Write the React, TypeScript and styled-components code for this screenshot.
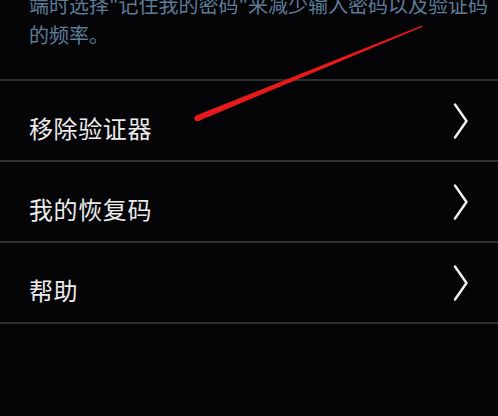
import React from "react";
import styled, { createGlobalStyle } from "styled-components";

const GlobalStyle = createGlobalStyle`
  html, body {
    margin: 0;
    padding: 0;
    background: #050507;
  }
  body {
    font-family: "Noto Sans CJK SC", "Noto Sans", sans-serif;
    -webkit-font-smoothing: antialiased;
  }
`;

const Screen = styled.div`
  position: relative;
  width: 498px;
  height: 416px;
  overflow: hidden;
  background: #050507;
`;

const Note = styled.div`
  padding: 0 20px 0 29px;
  height: 79px;
  overflow: hidden;
`;

const NoteText = styled.p`
  margin: -10px 0 0;
  font-size: 20px;
  line-height: 30px;
  color: #5d7c97;
  white-space: nowrap;
`;

const List = styled.ul`
  list-style: none;
  margin: 0;
  padding: 0;
  border-top: 2px solid #2e2e30;
`;

const Row = styled.li`
  display: flex;
  align-items: center;
  justify-content: space-between;
  height: 79px;
  padding: 0 29px 0 29px;
  border-bottom: 2px solid #2e2e30;
`;

const Label = styled.span`
  padding-top: 14px;
  font-size: 24px;
  line-height: 30px;
  color: #ececec;
  letter-spacing: 0.6px;
`;

const Chevron = styled.svg`
  width: 16px;
  height: 36px;
  flex: none;
`;

const Annotation = styled.svg`
  position: absolute;
  left: 0;
  top: 0;
  width: 498px;
  height: 416px;
  pointer-events: none;
`;

const items = ["移除验证器", "我的恢复码", "帮助"];

export default function App() {
  return (
    <Screen>
      <GlobalStyle />
      <Note>
        <NoteText>
          端时选择"记住我的密码"来减少输入密码以及验证码
          <br />
          的频率。
        </NoteText>
      </Note>
      <List>
        {items.map((t) => (
          <Row key={t}>
            <Label>{t}</Label>
            <Chevron viewBox="0 0 16 36">
              <polyline
                points="2,1.5 13.5,18 2,34.5"
                fill="none"
                stroke="#f2f2f2"
                strokeWidth="2.4"
                strokeLinecap="round"
                strokeLinejoin="round"
              />
            </Chevron>
          </Row>
        ))}
      </List>
      <Annotation viewBox="0 0 498 416">
        <polygon
          points="422,25.5 422.6,26.8 199,120.8 196,115.4"
          fill="#e8191a"
        />
        <ellipse cx="198" cy="118" rx="3.8" ry="3" fill="#e8191a" transform="rotate(-22 198 118)" />
      </Annotation>
    </Screen>
  );
}
